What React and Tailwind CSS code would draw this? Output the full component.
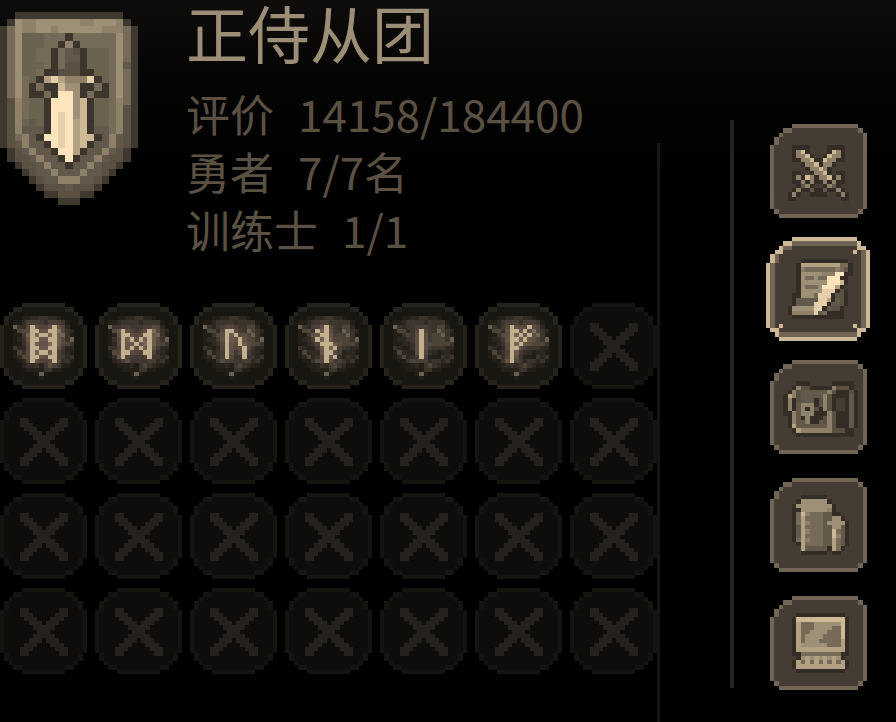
import { useState } from "react";

const PALETTE = {
  o: "#3f382e",
  d: "#3c352c",
  s: "#332d26",
  g: "#69634f",
  1: "#5a5142",
  2: "#63594a",
  3: "#766b59",
  4: "#8f8069",
  5: "#9e9076",
  A: "#fde4bd",
  B: "#cdb995",
  C: "#b3a183",
  D: "#e5cfaa",
  // button frames
  f: "#716655",
  k: "#453d33",
  // rune slots
  r: "#26231c",
  q: "#181611",
  a: "#211e18",
  b: "#2c2821",
  c: "#3a342b",
  e: "#4c4437",
  h: "#6b604f",
  G: "#c3b08f",
  // locked slots
  t: "#151410",
  u: "#0e0d0b",
  x: "#25221d",
};

const SHIELD = [
  "..ooooooooooooooo..",
  ".o5445555554455554o.".slice(0, 2) + "54455555544555" + "4o.",
  "o35445545555554443o",
  "o35ggg333d333333" + "53o",
  "o35ggg33d4d3333353o",
  "o35gg33d321dggg353o",
  "o35gg33d322dggg353o",
  "o35ggg3d311dggg352o",
  "o35gg3dd111ddgg353o",
  "o353gdCDC444Ddg353o",
  "o353d3ddB55dd3d353o",
  "o353dd3dAA5d3dd353o",
  "o143ggdAAA5Bdgg343o",
  "o143ggdAAA5Bdgg341o",
  "o143ggdADA5Bdgg341o",
  "o14g2gdADACBdgg341o",
  "o14222dADACBd22341o",
  "o1342dAADACBBd2421o",
  "o12422dADACBd22421o",
  ".o12422dAACd22421o.",
  ".o112422dAd224211o.",
  "..o112422d224211o..",
  "...o1224222422" + "1o...",
  "....o122444221o....",
  ".....o1112111o.....",
  "......oo111oo......",
  "........ooo........",
];

const BUTTON_FRAME = [
  ".....fffffffffffffff..",
  "...ffkkkkkkkkkkkkkkkf.",
  "..fkkkkkkkkkkkkkkkkkkf",
  ".fkkkkkkkkkkkkkkkkkkkf",
  ".fkkkkkkkkkkkkkkkkkkkf",
  ...Array(15).fill("fkkkkkkkkkkkkkkkkkkkkf"),
  ".fkkkkkkkkkkkkkkkkkkf.",
  "..ffffffffffffffffff..",
];

const ACTIVE_FRAME = [
  "......BBBBBBBBBBBBBBB...",
  "....BBfffffffffffffffB..",
  "...BffkkkkkkkkkkkkkkkBB.",
  "..BBkkkkkkkkkkkkkkkkBkfB",
  ".BfkkkkkkkkkkkkkkkkkkkfB",
  ".BfkkkkkkkkkkkkkkkkkkkfB",
  ...Array(14).fill("BfkkkkkkkkkkkkkkkkkkkkfB"),
  "BfkBkkkkkkkkkkkkkkkkBkfB",
  ".BBkkkkkkkkkkkkkkkkkkBB.",
  "..BffffffffffffffffffB..",
  "...BBBBBBBBBBBBBBBBBB...",
];

const SWORDS = [
  ".ssss....ssss.",
  ".s4Bs....sB4s.",
  ".s44Bs..sB44s.",
  ".ss44BssB44ss.",
  "...s44Bs44s...",
  "....s44B4s....",
  ".ss..s44Bs.ss.",
  ".s4sB4s44Bs4s.",
  ".ss4s4ss44s4s.".replace("44s4s", "4s4ss"),
  "..s24s..s42s..",
  ".s4s s2ss2s s4s".replace(/ /g, "").padEnd(14, "."),
  "s4s..ssss..s4s",
  "ss..........ss",
];

const SCROLL = [
  "...sssssssssss.",
  "..sCCCCCCCCC33s",
  "..s433333334" + "32s",
  "..s55555444AAss",
  "..s53353335AAs".replace("335AAs", "3AAAss"),
  "..s555555AAAs".replace("AAAs", "AAABs"),
  "..s53335AAACs",
  "..s55555DDDs1s",
  ".ss5553DDDs11s",
  ".s22222DDCs21s",
  ".s2222DDDs221s",
  "s55555DDs211s",
  "s44444D23ssss",
  ".ssssssssssss",
];

const PACK = [
  "...sss.....sssss.",
  "..s411sssss4111s.",
  ".s412222224" + "1sss1s",
  "sC412222241ssss2s",
  "s4s1222s141skks2s",
  "s4s2444s141skks2s",
  "s4s24s41s41skks2s",
  "ss42444sss41sss2s",
  ".s42s4sss141sss2s",
  ".s4224ss2141sss2s",
  ".sC222222241sss2s",
  "..sC4444444111ss.",
  "...sssssssssssss.",
];

const LOGS = [
  "..ssssss.....",
  ".s555555s....",
  "s55555555s...",
  "ss5555554s...",
  "s3B433322ss..",
  "s3C33332255s.",
  "s3C433325555s",
  "s2C333322552s",
  "s2C4333" + "22B32s",
  "s2C3333" + "22B42s",
  "s3C4333" + "22C32s",
  ".sC3333" + "22C32s",
  "..C22222sC3s.",
  "..ssssss.ss..",
];

const CHEST = [
  ".sssssssssss.",
  "sBBBBBBBBBBBs",
  "sC333555555Bs",
  "sC333555533Bs",
  "sC335555333Bs",
  "sC355553333Bs",
  "sC355533333Cs",
  "sC555555333Cs",
  "sCCCCCCCCCCCs",
  "ss333333333ss",
  ".s5C5C5C5C5s.",
  "sC3C3C3C3C3Cs",
  "sCCCCCCCCCCCs",
  ".sssssssssss.",
];

function slotFrame(edge, fill) {
  const inner = (n) => fill.repeat(n);
  const top = [
    "....." + edge.repeat(10) + ".....",
    "..." + edge.repeat(2) + inner(10) + edge.repeat(2) + "...",
    ".." + edge + inner(14) + edge + "..",
    "." + edge + inner(16) + edge + ".",
    "." + edge + inner(16) + edge + ".",
  ];
  return [...top, ...Array(10).fill(edge + inner(18) + edge), ...[...top].reverse()];
}

const RUNE_FRAME = slotFrame("r", "q");
const LOCKED_FRAME = slotFrame("t", "u");

const CROSS = [
  "xx.......xx",
  "xxx.....xxx",
  ".xxx...xxx.",
  "..xxx.xxx..",
  "...xxxxx...",
  "....xxx....",
  "...xxxxx...",
  "..xxx.xxx..",
  ".xxx...xxx.",
  "xxx.....xxx",
  "xx.......xx",
];

// worn stone behind every rune, 14 x 15 cells
const STONE = [
  "..aabbccbba...",
  "aabccccbcccca.",
  "hcbccccccceeh.".slice(0, 11) + "eb.",
  "aeebcccccchecb",
  "aaceccccceehca",
  "abbcccccceeech",
  "aabbbccceeeeec",
  "cbaabcccccccbb",
  "aebbaccbbbabba",
  "abebbbcbaaacbc",
  ".aacecccbccbca",
  "..aaabacecbaa.",
  "...aaaaccaa...",
  ".....aha......",
  "......a.......",
];

const RUNES = [
  {
    name: "ᛥ",
    x: 7,
    y: 5,
    rows: ["G....G", "GG..GG", "G.GG.G", "GG..GG", "G....G", "GG..GG", "G.GG.G", "GG..GG", "G....G"],
  },
  { name: "ᛞ", x: 6, y: 6, rows: ["G.....G", "GG...GG", "G.G.G.G", "G..G..G", "G.G.G.G", "GG...GG", "G.....G"] },
  { name: "ᚢ", x: 8, y: 6, rows: ["GG...", "G.G..", "G..G.", "G..G.", "G...G", "G...G", "G...G"] },
  { name: "ᛃ", x: 7, y: 5, rows: ["..G..", "G.G..", ".GG..", "G.G..", ".GGG.", "..G.G", "..GG.", "..G.G", "..G.."] },
  { name: "ᛁ", x: 9, y: 6, rows: ["G", "G", "G", "G", "G", "G", "G"] },
  { name: "ᚠ", x: 8, y: 5, rows: ["G...G", "GG.G.", "G.G.G", "GG.G.", "G.G..", "GG...", "G....", "G....", "G...."] },
];

function Pixels({ rows, x = 0, y = 0 }) {
  const cells = [];
  rows.forEach((row, j) => {
    let i = 0;
    while (i < row.length) {
      let end = i + 1;
      while (end < row.length && row[end] === row[i]) end++;
      if (PALETTE[row[i]]) {
        cells.push(<rect key={`${i}-${j}`} x={x + i} y={y + j} width={end - i} height={1} fill={PALETTE[row[i]]} />);
      }
      i = end;
    }
  });
  return <g>{cells}</g>;
}

function Halo({ rows, x, y }) {
  const cells = [];
  rows.forEach((row, j) => {
    [...row].forEach((ch, i) => {
      if (ch !== "G") return;
      cells.push(<rect key={`n${i}-${j}`} x={x + i - 1} y={y + j - 1} width={3} height={3} opacity={0.07} />);
      cells.push(<rect key={`w${i}-${j}`} x={x + i - 2} y={y + j - 2} width={5} height={5} opacity={0.02} />);
    });
  });
  return <g fill="#c3b08f">{cells}</g>;
}

function Art({ width, height, className, children }) {
  return (
    <svg
      viewBox={`0 0 ${width} ${height}`}
      preserveAspectRatio="none"
      shapeRendering="crispEdges"
      aria-hidden="true"
      className={className}
    >
      {children}
    </svg>
  );
}

function Slot({ rune }) {
  return (
    <button type="button" aria-label={rune ? rune.name : "空"} disabled={!rune} className="block">
      <Art width={20} height={20} className="block h-[86px] w-[87px]">
        <Pixels rows={rune ? RUNE_FRAME : LOCKED_FRAME} />
        {rune ? (
          <>
            <Pixels rows={STONE} x={3} y={3} />
            <Halo {...rune} />
            <Pixels rows={rune.rows} x={rune.x} y={rune.y} />
          </>
        ) : (
          <Pixels rows={CROSS} x={4.6} y={4.7} />
        )}
      </Art>
    </button>
  );
}

const TABS = [
  { id: "battle", label: "战斗", rows: SWORDS, x: 4, y: 5 },
  { id: "records", label: "记录", rows: SCROLL, x: 4, y: 4 },
  { id: "pack", label: "背包", rows: PACK, x: 3, y: 5 },
  { id: "logs", label: "木材", rows: LOGS, x: 5, y: 4 },
  { id: "chest", label: "宝箱", rows: CHEST, x: 5, y: 4 },
];

function TabButton({ tab, active, onClick }) {
  return (
    <button type="button" aria-label={tab.label} aria-pressed={active} onClick={onClick} className={active ? "-my-[5px] block" : "block"}>
      {active ? (
        <Art width={24} height={24} className="block size-[104px]">
          <Pixels rows={ACTIVE_FRAME} />
          <Pixels rows={tab.rows} x={tab.x + 1} y={tab.y + 1} />
        </Art>
      ) : (
        <Art width={22} height={22} className="block h-[94px] w-[97px]">
          <Pixels rows={BUTTON_FRAME} />
          <Pixels rows={tab.rows} x={tab.x} y={tab.y} />
        </Art>
      )}
    </button>
  );
}

const STATS = [
  { label: "评价", value: "14158/184400" },
  { label: "勇者", value: "7/7名" },
  { label: "训练士", value: "1/1" },
];

export default function App() {
  const [selected, setSelected] = useState("records");
  const slots = Array.from({ length: 28 }, (_, i) => RUNES[i]);

  return (
    <div className="flex min-h-screen bg-black bg-linear-to-b from-[#0e0d0b] to-black to-40% font-['Noto_Sans_CJK_SC',sans-serif]">
      <main className="flex shrink-0">
        <div>
          <header className="flex gap-12">
            <Art width={19} height={27} className="mt-3 block h-[193px] w-[138px]">
              <Pixels rows={SHIELD} />
            </Art>
            <div>
              <h1 className="text-[62px] leading-[64px] text-[#9c8e76]">正侍从团</h1>
              <dl className="mt-5 text-[44px] leading-[58px] text-[#5a5143]">
                {STATS.map((stat) => (
                  <div key={stat.label} className="flex gap-6">
                    <dt>{stat.label}</dt>
                    <dd>{stat.value}</dd>
                  </div>
                ))}
              </dl>
            </div>
          </header>
          <section className="mt-[45px] grid w-fit grid-cols-7 gap-x-2 gap-y-[9px]">
            {slots.map((rune, i) => (
              <Slot key={i} rune={rune} />
            ))}
          </section>
        </div>
        <div className="mt-[143px] w-[3px] bg-[#171511]" />
      </main>
      <nav className="ml-auto flex pr-[26px]">
        <div className="mt-[120px] mb-[34px] w-1 bg-[#28231d]" />
        <div className="ml-8 flex flex-col items-center gap-6 pt-[124px]">
          {TABS.map((tab) => (
            <TabButton key={tab.id} tab={tab} active={tab.id === selected} onClick={() => setSelected(tab.id)} />
          ))}
        </div>
      </nav>
    </div>
  );
}
